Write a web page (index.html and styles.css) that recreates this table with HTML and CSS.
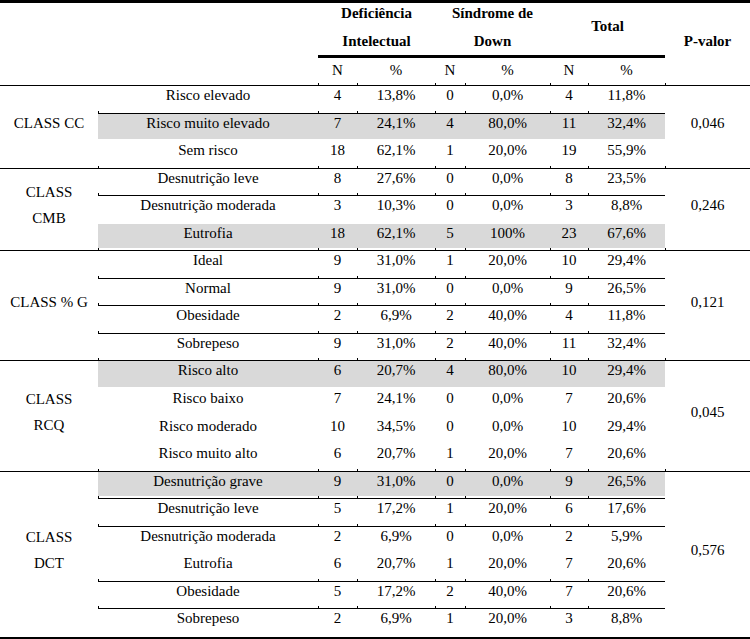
FILE: index.html
```html
<!DOCTYPE html>
<html lang="pt">
<head>
<meta charset="utf-8">
<title>Tabela</title>
<link rel="stylesheet" href="styles.css">
</head>
<body>
<table class="tbl">
  <colgroup>
    <col class="c-cat"><col class="c-sub"><col class="c-n1"><col class="c-p1"><col class="c-n2"><col class="c-p2"><col class="c-n3"><col class="c-p3"><col class="c-pv">
  </colgroup>
  <thead>
    <tr class="h1">
      <th colspan="2" rowspan="2" class="corner"></th>
      <th colspan="2" class="grp"><div class="two">Deficiência<br>Intelectual</div></th>
      <th colspan="2" class="grp"><div class="two">Síndrome de<br>Down</div></th>
      <th colspan="2" class="grp total">Total</th>
      <th rowspan="2" class="pvh tk">P-valor</th>
    </tr>
    <tr class="h2">
      <th class="tk">N</th><th class="tk">%</th>
      <th class="tk">N</th><th class="tk">%</th>
      <th class="tk">N</th><th class="tk">%</th>
    </tr>
  </thead>
  <tbody>
    <tr class="row ln">
      <td rowspan="3" class="cat gl">CLASS CC</td>
      <td>Risco elevado</td><td>4</td><td>13,8%</td><td>0</td><td>0,0%</td><td>4</td><td>11,8%</td>
      <td rowspan="3" class="pv gl">0,046</td>
    </tr>
    <tr class="row gray">
      <td>Risco muito elevado</td><td>7</td><td>24,1%</td><td>4</td><td>80,0%</td><td>11</td><td>32,4%</td>
    </tr>
    <tr class="row ln">
      <td>Sem risco</td><td>18</td><td>62,1%</td><td>1</td><td>20,0%</td><td>19</td><td>55,9%</td>
    </tr>

    <tr class="row ln">
      <td rowspan="3" class="cat gl">CLASS<br>CMB</td>
      <td>Desnutrição leve</td><td>8</td><td>27,6%</td><td>0</td><td>0,0%</td><td>8</td><td>23,5%</td>
      <td rowspan="3" class="pv gl">0,246</td>
    </tr>
    <tr class="row">
      <td>Desnutrição moderada</td><td>3</td><td>10,3%</td><td>0</td><td>0,0%</td><td>3</td><td>8,8%</td>
    </tr>
    <tr class="row gray ln">
      <td>Eutrofia</td><td>18</td><td>62,1%</td><td>5</td><td>100%</td><td>23</td><td>67,6%</td>
    </tr>

    <tr class="row ln">
      <td rowspan="4" class="cat gl">CLASS % G</td>
      <td>Ideal</td><td>9</td><td>31,0%</td><td>1</td><td>20,0%</td><td>10</td><td>29,4%</td>
      <td rowspan="4" class="pv gl">0,121</td>
    </tr>
    <tr class="row ln">
      <td>Normal</td><td>9</td><td>31,0%</td><td>0</td><td>0,0%</td><td>9</td><td>26,5%</td>
    </tr>
    <tr class="row ln">
      <td>Obesidade</td><td>2</td><td>6,9%</td><td>2</td><td>40,0%</td><td>4</td><td>11,8%</td>
    </tr>
    <tr class="row ln">
      <td>Sobrepeso</td><td>9</td><td>31,0%</td><td>2</td><td>40,0%</td><td>11</td><td>32,4%</td>
    </tr>

    <tr class="row gray">
      <td rowspan="4" class="cat gl">CLASS<br>RCQ</td>
      <td>Risco alto</td><td>6</td><td>20,7%</td><td>4</td><td>80,0%</td><td>10</td><td>29,4%</td>
      <td rowspan="4" class="pv gl">0,045</td>
    </tr>
    <tr class="row">
      <td>Risco baixo</td><td>7</td><td>24,1%</td><td>0</td><td>0,0%</td><td>7</td><td>20,6%</td>
    </tr>
    <tr class="row">
      <td>Risco moderado</td><td>10</td><td>34,5%</td><td>0</td><td>0,0%</td><td>10</td><td>29,4%</td>
    </tr>
    <tr class="row ln">
      <td>Risco muito alto</td><td>6</td><td>20,7%</td><td>1</td><td>20,0%</td><td>7</td><td>20,6%</td>
    </tr>

    <tr class="row gray ln">
      <td rowspan="6" class="cat">CLASS<br>DCT</td>
      <td>Desnutrição grave</td><td>9</td><td>31,0%</td><td>0</td><td>0,0%</td><td>9</td><td>26,5%</td>
      <td rowspan="6" class="pv">0,576</td>
    </tr>
    <tr class="row ln">
      <td>Desnutrição leve</td><td>5</td><td>17,2%</td><td>1</td><td>20,0%</td><td>6</td><td>17,6%</td>
    </tr>
    <tr class="row">
      <td>Desnutrição moderada</td><td>2</td><td>6,9%</td><td>0</td><td>0,0%</td><td>2</td><td>5,9%</td>
    </tr>
    <tr class="row ln">
      <td>Eutrofia</td><td>6</td><td>20,7%</td><td>1</td><td>20,0%</td><td>7</td><td>20,6%</td>
    </tr>
    <tr class="row ln">
      <td>Obesidade</td><td>5</td><td>17,2%</td><td>2</td><td>40,0%</td><td>7</td><td>20,6%</td>
    </tr>
    <tr class="row">
      <td>Sobrepeso</td><td>2</td><td>6,9%</td><td>1</td><td>20,0%</td><td>3</td><td>8,8%</td>
    </tr>
  </tbody>
</table>
</body>
</html>
```

FILE: styles.css
```css
* { box-sizing: border-box; }
html, body { margin: 0; padding: 0; background: #fff; }
body { font-family: "Liberation Serif", "Times New Roman", serif; color: #000; }

.tbl {
  width: 750px;
  table-layout: fixed;
  border-collapse: separate;
  border-spacing: 0;
  border-top: 3px solid #000;
  border-bottom: 4px solid #000;
  font-size: 15px;
}
.c-cat { width: 98px; }
.c-sub { width: 220px; }
.c-n1 { width: 39px; }
.c-p1 { width: 78px; }
.c-n2 { width: 30px; }
.c-p2 { width: 85px; }
.c-n3 { width: 38px; }
.c-p3 { width: 77px; }
.c-pv { width: 85px; }

.tbl th, .tbl td {
  padding: 0;
  text-align: center;
  font-weight: normal;
  line-height: 17px;
  vertical-align: top;
  white-space: nowrap;
}
.tbl td { padding-top: 1px; }

/* header */
.h1 { height: 55px; }
.tbl .h1 th { line-height: 28px; }
.tbl .grp { font-weight: bold; border-bottom: 3px solid #000; }
.grp .two { margin-top: -4px; }
.tbl .total { padding-top: 9px; }
.tbl .pvh { font-weight: bold; padding-top: 24px; border-bottom: 1px solid #000; }
.tbl .corner { border-bottom: 1px solid #000; }
.h2 { height: 28px; }
.tbl .h2 th { padding-top: 4px; border-bottom: 1px solid #000; }

.tbl .tk {
  background: linear-gradient(#000, #000) left bottom / 1px 2px no-repeat;
}

/* body */
.row { height: 27.55px; }

.tbl .cat, .tbl .pv {
  vertical-align: middle;
  line-height: 26px;
  padding-top: 0;
  padding-bottom: 8px;
}
.tbl .gl { border-bottom: 1px solid #000; }
.tbl .pv.gl {
  background: linear-gradient(#000, #000) left bottom / 1px 2px no-repeat;
}

.tbl tr.ln > td:not(.cat):not(.pv) {
  border-bottom: 1px solid #000;
  background: linear-gradient(#000, #000) left bottom / 1px 2px no-repeat;
}
.tbl tr.gray > td:not(.cat):not(.pv) {
  background: linear-gradient(#d9d9d9, #d9d9d9) top / 100% calc(100% - 2px) no-repeat;
}
.tbl tr.gray.ln > td:not(.cat):not(.pv) {
  background:
    linear-gradient(#000, #000) left bottom / 1px 2px no-repeat,
    linear-gradient(#d9d9d9, #d9d9d9) top / 100% calc(100% - 2px) no-repeat;
}
```
